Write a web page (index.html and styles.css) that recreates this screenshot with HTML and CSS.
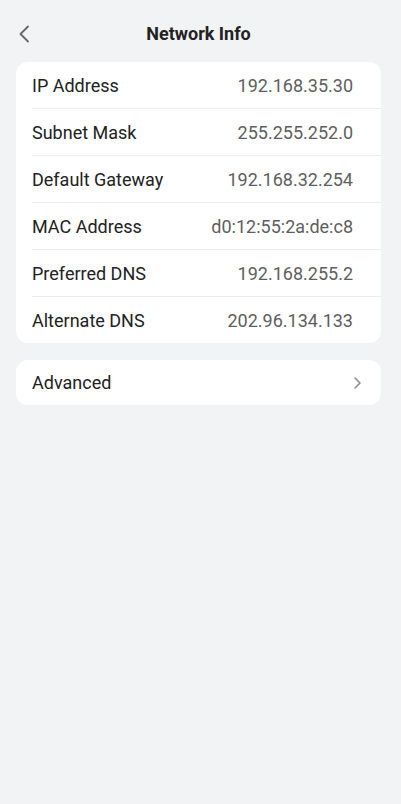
FILE: index.html
```html
<!DOCTYPE html>
<html>
<head>
<meta charset="utf-8">
<link rel="stylesheet" href="styles.css">
</head>
<body>
<div class="page">
  <header class="nav">
    <button class="back" aria-label="Back">
      <svg width="14" height="18" viewBox="0 0 14 18"><path d="M11 1.5 L3.5 9 L11 16.5" fill="none" stroke="#666" stroke-width="1.8" stroke-linecap="round" stroke-linejoin="round"/></svg>
    </button>
    <h1 class="title">Network Info</h1>
  </header>
  <section class="card">
    <div class="row"><span class="label">IP Address</span><span class="value">192.168.35.30</span></div>
    <div class="row"><span class="label">Subnet Mask</span><span class="value">255.255.252.0</span></div>
    <div class="row"><span class="label">Default Gateway</span><span class="value">192.168.32.254</span></div>
    <div class="row"><span class="label">MAC Address</span><span class="value">d0:12:55:2a:de:c8</span></div>
    <div class="row"><span class="label">Preferred DNS</span><span class="value">192.168.255.2</span></div>
    <div class="row"><span class="label">Alternate DNS</span><span class="value">202.96.134.133</span></div>
  </section>
  <section class="card">
    <div class="row link"><span class="label">Advanced</span>
      <svg class="chev" width="9" height="14" viewBox="0 0 9 14"><path d="M2 2 L7 7 L2 12" fill="none" stroke="#888" stroke-width="1.5" stroke-linecap="round" stroke-linejoin="round"/></svg>
    </div>
  </section>
</div>
</body>
</html>
```
FILE: styles.css
```css
html, body {
  margin: 0;
  padding: 0;
  background: #f2f3f5;
}
body {
  font-family: Roboto, "Noto Sans", sans-serif;
  color: #222;
  width: 401px;
  min-height: 804px;
}
.page {
  padding: 0 20px 0 16px;
  display: flex;
  flex-direction: column;
}
.nav {
  position: relative;
  height: 62px;
  display: flex;
  align-items: center;
  justify-content: center;
}
.back {
  position: absolute;
  left: 0;
  top: 24px;
  border: 0;
  background: none;
  padding: 0;
  width: 16px;
  height: 20px;
  display: flex;
  align-items: center;
  justify-content: center;
}
.title {
  margin: 0;
  font-size: 18px;
  font-weight: 700;
  color: #222;
  padding-top: 4px;
}
.card {
  background: #fff;
  border-radius: 12px;
  margin-bottom: 17px;
  overflow: hidden;
}
.row {
  height: 47px;
  margin-left: 16px;
  padding-right: 28px;
  display: flex;
  align-items: center;
  justify-content: space-between;
  border-top: 1px solid #ededed;
  box-sizing: border-box;
}
.row:first-child {
  border-top: none;
  height: 46px;
}
.label {
  font-size: 18px;
  color: #222;
}
.value {
  font-size: 18px;
  color: #5e5e5e;
}
.link {
  height: 45px;
  padding-right: 19px;
}
.row.link:first-child {
  height: 45px;
}
.chev {
  display: block;
}
```
